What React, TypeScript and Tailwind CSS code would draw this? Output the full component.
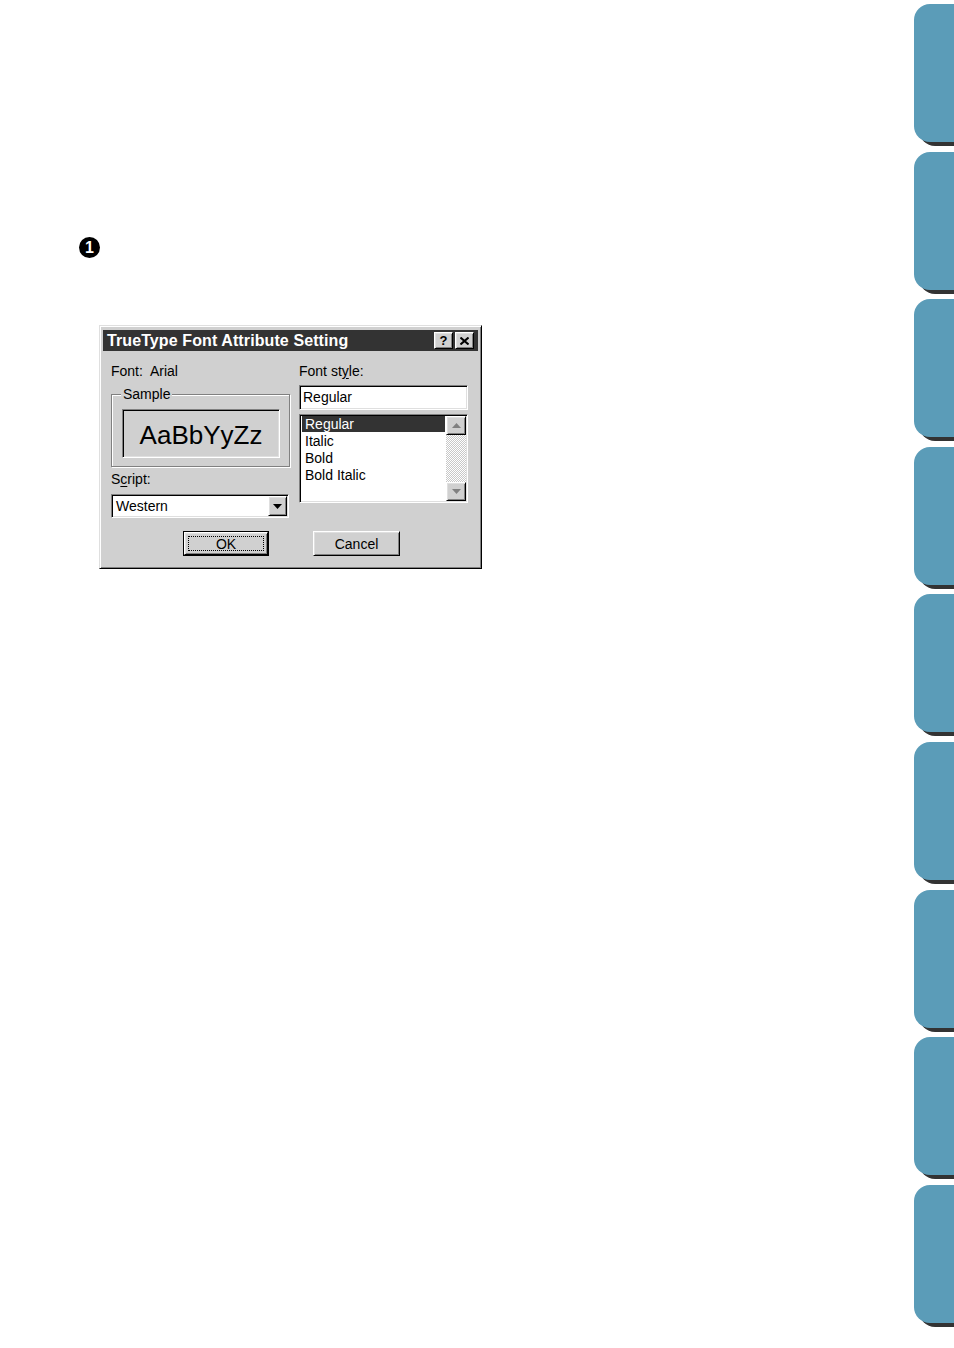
import React from "react";

const sunken =
  "border border-[#808080] border-r-white border-b-white shadow-[inset_1px_1px_0_#000,inset_-1px_-1px_0_#dfdfdf]";
const raised =
  "border border-white border-r-black border-b-black shadow-[inset_1px_1px_0_#dfdfdf,inset_-1px_-1px_0_#808080]";

function ArrowUp({ color = "#808080" }: { color?: string }) {
  return (
    <svg width="9" height="5" viewBox="0 0 9 5">
      <path d="M4.5 0 L9 5 L0 5 Z" fill={color} />
    </svg>
  );
}
function ArrowDown({ color = "#808080" }: { color?: string }) {
  return (
    <svg width="9" height="5" viewBox="0 0 9 5">
      <path d="M0 0 L9 0 L4.5 5 Z" fill={color} />
    </svg>
  );
}

function Dialog() {
  return (
    <div
      className="w-[383px] h-[244px] bg-[#d0d0d0] border border-[#dfdfdf] border-r-black border-b-black shadow-[inset_1px_1px_0_#fff,inset_-1px_-1px_0_#808080] px-[3px] pt-[4px] text-black text-[14px] font-['Liberation_Sans',Arial,sans-serif]"
    >
      {/* Title bar */}
      <div className="h-[21px] bg-[#333333] flex items-center justify-between pl-[4px] pr-[4px]">
        <span className="text-white font-bold text-[16px] leading-[21px] whitespace-nowrap tracking-[0.1px]">
          TrueType Font Attribute Setting
        </span>
        <div className="flex gap-[2px]">
          <div className={`w-[19px] h-[17px] bg-[#d0d0d0] ${raised} flex items-center justify-center`}>
            <span className="font-bold text-[13px] leading-none text-black">?</span>
          </div>
          <div className={`w-[19px] h-[17px] bg-[#d0d0d0] ${raised} flex items-center justify-center`}>
            <svg width="9" height="8" viewBox="0 0 9 8">
              <path d="M0.5 0.5 L8.5 7.5 M8.5 0.5 L0.5 7.5" stroke="#000" strokeWidth="2" />
            </svg>
          </div>
        </div>
      </div>

      {/* Body columns */}
      <div className="flex items-start pl-[8px] pt-[12px] gap-[9px]">
        {/* Left column */}
        <div className="w-[179px] flex flex-col">
          <div className="h-[17px] leading-[17px] whitespace-pre">Font:  Arial</div>
          <div className="relative mt-[14px] h-[73px] border border-[#808080] shadow-[inset_1px_1px_0_#fff,1px_1px_0_#fff]">
            <span className="absolute left-[9px] top-[-9px] px-[2px] bg-[#d0d0d0] leading-[17px]">
              Sample
            </span>
            <div
              className={`ml-[10px] mt-[14px] w-[158px] h-[49px] ${sunken} flex items-center justify-center pt-[3px]`}
            >
              <span className="text-[26px] leading-none">AaBbYyZz</span>
            </div>
          </div>
          <div className="mt-[4px] h-[17px] leading-[17px]">
            S<span className="underline underline-offset-2">c</span>ript:
          </div>
          <div className={`mt-[6px] w-[178px] h-[24px] bg-white ${sunken} p-[1px] flex`}>
            <div className="flex-1 pl-[3px] leading-[20px]">Western</div>
            <div className={`w-[19px] h-full bg-[#d0d0d0] ${raised} flex items-center justify-center`}>
              <ArrowDown color="#000" />
            </div>
          </div>
        </div>

        {/* Right column */}
        <div className="w-[169px] flex flex-col">
          <div className="h-[17px] leading-[17px]">
            Font st<span className="underline underline-offset-2">y</span>le:
          </div>
          <div className={`mt-[5px] h-[25px] bg-white ${sunken} pl-[3px] leading-[23px]`}>Regular</div>
          <div className={`mt-[4px] h-[89px] bg-white ${sunken} pt-[1px] pb-[1px] pl-[2px] pr-[1px] flex`}>
            <div className="flex-1 flex flex-col">
              <div className="h-[16px] leading-[16px] pl-[3px] bg-[#333333] text-white">Regular</div>
              <div className="h-[17px] leading-[18px] pl-[3px]">Italic</div>
              <div className="h-[17px] leading-[18px] pl-[3px]">Bold</div>
              <div className="h-[17px] leading-[18px] pl-[3px]">Bold Italic</div>
            </div>
            <div className="ml-[1px] w-[20px] h-full flex flex-col">
              <div className={`h-[19px] bg-[#d0d0d0] ${raised} flex items-center justify-center`}>
                <ArrowUp />
              </div>
              <div className="flex-1 [background-image:repeating-conic-gradient(#ffffff_0_25%,#c8c8c8_0_50%)] [background-size:2px_2px]" />
              <div className={`h-[19px] bg-[#d0d0d0] ${raised} flex items-center justify-center`}>
                <ArrowDown />
              </div>
            </div>
          </div>
        </div>
      </div>

      {/* Buttons */}
      <div className="flex mt-[13px] ml-[80px] gap-[44px]">
        <div className="w-[86px] h-[25px] border border-black">
          <div className={`w-full h-full bg-[#d0d0d0] ${raised} p-[3px]`}>
            <div className="w-full h-full border border-dotted border-black flex items-center justify-center leading-none">
              OK
            </div>
          </div>
        </div>
        <div className={`w-[87px] h-[25px] bg-[#d0d0d0] ${raised} flex items-center justify-center leading-none`}>
          Cancel
        </div>
      </div>
    </div>
  );
}

export default function App() {
  const tabs = Array.from({ length: 9 });
  return (
    <div className="w-[954px] h-[1348px] bg-white flex overflow-hidden font-['Liberation_Sans',Arial,sans-serif]">
      <div className="flex-1 flex flex-col">
        <div className="pt-[237px] pl-[79px]">
          <div className="w-[21px] h-[21px] rounded-full bg-black text-white flex items-center justify-center font-bold text-[16px] leading-none">
            1
          </div>
        </div>
        <div className="mt-[67px] ml-[99px]">
          <Dialog />
        </div>
      </div>
      <div className="w-[40px] pt-[4px] flex flex-col gap-[9.6px]">
        {tabs.map((_, i) => (
          <div
            key={i}
            className="h-[138px] shrink-0 bg-[#5b9cb8] rounded-l-[16px] shadow-[5px_4px_0_#333333]"
          />
        ))}
      </div>
    </div>
  );
}
